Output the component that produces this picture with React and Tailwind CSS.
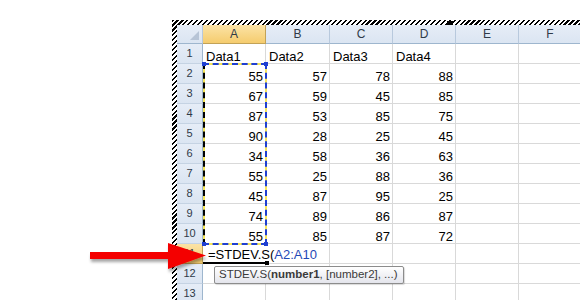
const COLS = ['A', 'B', 'C', 'D', 'E', 'F']
const WIDTHS = ['w-[63px]', 'w-[64px]', 'w-[63px]', 'w-[63px]', 'w-[63px]', 'w-[63px]']

const DATA = [
  [55, 57, 78, 88],
  [67, 59, 45, 85],
  [87, 53, 85, 75],
  [90, 28, 25, 45],
  [34, 58, 36, 63],
  [55, 25, 88, 36],
  [45, 87, 95, 25],
  [74, 89, 86, 87],
  [55, 85, 87, 72],
]

function RowHead({ n, active }) {
  return (
    <div
      className={`w-[26px] h-full shrink-0 flex items-center justify-center border-r border-b text-[11px] text-[#2f3a48] ${
        active
          ? 'bg-[linear-gradient(#fbe3a6,#f5cc6e)] border-r-[#c2a257] border-b-[#c2a257]'
          : 'bg-[linear-gradient(#e6edf7,#dbe5f2)] border-r-[#9eb6ce] border-b-[#c5d3e3]'
      }`}
    >
      {n}
    </div>
  )
}

function Cell({ i, children, right, className = '' }) {
  return (
    <div
      className={`${WIDTHS[i]} h-full shrink-0 flex items-end border-r border-b border-[#d9d9d9] text-[13px] leading-[13px] text-black whitespace-nowrap ${
        right ? 'justify-end pr-[2px]' : 'pl-[3px]'
      } ${className}`}
    >
      {children}
    </div>
  )
}

export default function App() {
  return (
    <div className="relative w-[580px] h-[300px] overflow-hidden bg-white font-['Liberation_Sans',Arial,sans-serif]">
      {/* sheet window with hatched resize frame */}
      <div className="pt-[20px] pl-[172px]">
        <div className="relative pt-[5px] pl-[5px] bg-[repeating-linear-gradient(135deg,#000_0px,#000_1.5px,#fff_1.5px,#fff_3.5px)]">
          <div className="relative bg-white w-[420px] h-[280px]">
            {/* column headers */}
            <div className="flex h-[19px]">
              <div className="w-[26px] h-full shrink-0 relative border-r border-b border-r-[#b8c9dd] border-b-[#9eb6ce] bg-[linear-gradient(#e6edf7,#dbe5f2)]">
                <svg className="absolute right-[3px] bottom-[3px]" width="9" height="9" viewBox="0 0 9 9">
                  <polygon points="9,0 9,9 0,9" fill="#b7c4d6" />
                </svg>
              </div>
              {COLS.map((c, i) => (
                <div
                  key={c}
                  className={`${WIDTHS[i]} h-full shrink-0 flex items-center justify-center border-r border-b text-[12px] text-[#2f3a48] ${
                    i === 0
                      ? 'bg-[linear-gradient(#fbe3a6,#f5cc6e)] border-r-[#c2a257] border-b-[#c2a257]'
                      : 'bg-[linear-gradient(#e6edf7,#dbe5f2)] border-r-[#b8c9dd] border-b-[#9eb6ce]'
                  }`}
                >
                  {c}
                </div>
              ))}
            </div>

            {/* row 1: labels */}
            <div className="flex h-[20px]">
              <RowHead n={1} />
              {['Data1', 'Data2', 'Data3', 'Data4', '', ''].map((t, i) => (
                <Cell key={i} i={i}>{t}</Cell>
              ))}
            </div>

            {/* rows 2-10 */}
            {DATA.map((row, r) => (
              <div key={r} className="flex h-[20px]">
                <RowHead n={r + 2} />
                {[...row, '', ''].map((v, i) => (
                  <Cell key={i} i={i} right>{v}</Cell>
                ))}
              </div>
            ))}

            {/* row 11: cell being edited */}
            <div className="flex h-[20px]">
              <RowHead n={11} active />
              <Cell i={0} className="relative z-10 !pl-[5px] !border-r-0 !border-b-2 !border-b-black">
                <span className="pb-[1px] text-[13px]">
                  =STDEV.S(<span className="text-[#1f49b6]">A2:A10</span>
                </span>
                <span className="inline-block w-px h-[15px] bg-black ml-[1px] mb-[-2px]" />
                <span className="absolute right-[-3px] bottom-[-3px] w-[4px] h-[4px] bg-black" />
              </Cell>
              {[1, 2, 3, 4, 5].map(i => (
                <Cell key={i} i={i} />
              ))}
            </div>

            {/* rows 12-13 */}
            {[12, 13].map(n => (
              <div key={n} className="flex h-[20px]">
                <RowHead n={n} />
                {[0, 1, 2, 3, 4, 5].map(i => (
                  <Cell key={i} i={i} />
                ))}
              </div>
            ))}

            {/* marching ants around A2:A10 */}
            <div className="absolute left-[26px] top-[38px] w-[64px] h-[182px] border-2 border-[#f7e75a]">
              <div className="absolute -inset-[2px] border-2 border-dashed border-[#1f3fd1] border-l-black" />
              <span className="absolute -left-[3px] -top-[3px] w-[4px] h-[4px] bg-[#1f3fd1]" />
              <span className="absolute -right-[3px] -top-[3px] w-[4px] h-[4px] bg-[#1f3fd1]" />
              <span className="absolute -left-[3px] -bottom-[3px] w-[4px] h-[4px] bg-[#1f3fd1]" />
              <span className="absolute -right-[3px] -bottom-[3px] w-[4px] h-[4px] bg-[#1f3fd1]" />
            </div>
          </div>

          {/* resize handle on the frame */}
          <span className="absolute left-[275px] top-[1px] w-[6px] h-[4px] bg-black" />
        </div>
      </div>

      {/* function tooltip */}
      <div className="absolute left-[214px] top-[266px] h-[18px] w-[190px] flex items-center px-[4px] rounded-[2px] border border-[#8c8c8c] bg-[linear-gradient(#ffffff,#e4e5ec)] shadow-[1px_1px_1px_rgba(0,0,0,0.15)] text-[11.5px] text-[#3a3a3a] whitespace-nowrap">
        STDEV.S(<b className="font-bold">number1</b>, [number2], ...)
      </div>

      {/* red pointer arrow */}
      <svg className="absolute left-0 top-0 pointer-events-none" width="580" height="300" viewBox="0 0 580 300">
        <defs>
          <filter id="sh" x="-20%" y="-50%" width="140%" height="200%">
            <feDropShadow dx="1" dy="3" stdDeviation="1.6" floodColor="#000" floodOpacity="0.35" />
          </filter>
        </defs>
        <g filter="url(#sh)">
          <rect x="90" y="252" width="82" height="7" fill="#f40000" />
          <polygon points="168,243 206,255.5 168,269" fill="#f40000" />
        </g>
      </svg>
    </div>
  )
}
